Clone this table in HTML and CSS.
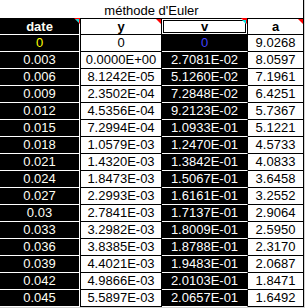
FILE: index.html
```html
<!DOCTYPE html>
<html>
<head>
<meta charset="utf-8">
<link rel="stylesheet" href="styles.css">
</head>
<body>
<div class="sheet">
  <div class="title">méthode d'Euler</div>

  <div class="cell c-date head note-inv">date</div>
  <div class="cell c-y head note">y</div>
  <div class="cell c-v head active note-inv">v</div>
  <div class="cell c-a head note">a</div>

  <div class="cell c-date first">0</div>
  <div class="cell c-y">0</div>
  <div class="cell c-v first">0</div>
  <div class="cell c-a">9.0268</div>

  <div class="cell c-date">0.003</div><div class="cell c-y">0.0000E+00</div><div class="cell c-v">2.7081E-02</div><div class="cell c-a">8.0597</div>
  <div class="cell c-date">0.006</div><div class="cell c-y">8.1242E-05</div><div class="cell c-v">5.1260E-02</div><div class="cell c-a">7.1961</div>
  <div class="cell c-date">0.009</div><div class="cell c-y">2.3502E-04</div><div class="cell c-v">7.2848E-02</div><div class="cell c-a">6.4251</div>
  <div class="cell c-date">0.012</div><div class="cell c-y">4.5356E-04</div><div class="cell c-v">9.2123E-02</div><div class="cell c-a">5.7367</div>
  <div class="cell c-date">0.015</div><div class="cell c-y">7.2994E-04</div><div class="cell c-v">1.0933E-01</div><div class="cell c-a">5.1221</div>
  <div class="cell c-date">0.018</div><div class="cell c-y">1.0579E-03</div><div class="cell c-v">1.2470E-01</div><div class="cell c-a">4.5733</div>
  <div class="cell c-date">0.021</div><div class="cell c-y">1.4320E-03</div><div class="cell c-v">1.3842E-01</div><div class="cell c-a">4.0833</div>
  <div class="cell c-date">0.024</div><div class="cell c-y">1.8473E-03</div><div class="cell c-v">1.5067E-01</div><div class="cell c-a">3.6458</div>
  <div class="cell c-date">0.027</div><div class="cell c-y">2.2993E-03</div><div class="cell c-v">1.6161E-01</div><div class="cell c-a">3.2552</div>
  <div class="cell c-date">0.03</div><div class="cell c-y">2.7841E-03</div><div class="cell c-v">1.7137E-01</div><div class="cell c-a">2.9064</div>
  <div class="cell c-date">0.033</div><div class="cell c-y">3.2982E-03</div><div class="cell c-v">1.8009E-01</div><div class="cell c-a">2.5950</div>
  <div class="cell c-date">0.036</div><div class="cell c-y">3.8385E-03</div><div class="cell c-v">1.8788E-01</div><div class="cell c-a">2.3170</div>
  <div class="cell c-date">0.039</div><div class="cell c-y">4.4021E-03</div><div class="cell c-v">1.9483E-01</div><div class="cell c-a">2.0687</div>
  <div class="cell c-date">0.042</div><div class="cell c-y">4.9866E-03</div><div class="cell c-v">2.0103E-01</div><div class="cell c-a">1.8471</div>
  <div class="cell c-date">0.045</div><div class="cell c-y">5.5897E-03</div><div class="cell c-v">2.0657E-01</div><div class="cell c-a">1.6492</div>
</div>
</body>
</html>
```

FILE: styles.css
```css
html, body {
  margin: 0;
  padding: 0;
  background: #d4d4d4;
  width: 305px;
  height: 308px;
  overflow: hidden;
}

.sheet {
  width: 304px;
  display: grid;
  grid-template-columns: 80px 82px 86px 56px;
  grid-template-rows: 19px 16px;
  grid-auto-rows: 17px;
  font-family: "Liberation Sans", Arial, sans-serif;
  font-size: 13px;
  color: #000;
}

.title {
  grid-column: 1 / 5;
  box-sizing: border-box;
  background: #fff;
  border-bottom: 1px solid #000;
  border-right: 1px solid #000;
  text-align: center;
  line-height: 14px;
  padding-top: 4px;
}

.cell {
  box-sizing: border-box;
  position: relative;
  text-align: center;
  line-height: 16px;
  white-space: nowrap;
}

.cell.head {
  line-height: 15px;
  font-weight: bold;
}

.c-date {
  background: #000;
  color: #fffff4;
  border-right: 1px solid #fff;
  border-bottom: 1px solid #fff;
}

.c-y {
  background: #fff;
  border-left: 1px solid #000;
  border-right: 1px solid #000;
  border-bottom: 1px solid #000;
}

.c-v {
  background: #000;
  color: #fff;
  border-right: 1px solid #000;
  border-bottom: 1px solid #fff;
}

.c-a {
  background: #fff;
  border-right: 1px solid #000;
  border-bottom: 1px solid #000;
}

.c-v.active {
  background: #fff;
  color: #000;
  border-bottom: 1px solid #000;
  box-shadow: inset 0 0 0 1px #fff, inset 0 0 0 2px #000;
}

.c-date.first { color: #ffff00; }
.c-v.first { color: #4040ff; }

.note::after,
.note-inv::after {
  content: "";
  position: absolute;
  top: 0;
  right: 0;
  width: 0;
  height: 0;
  border-top: 5px solid #f00;
  border-left: 5px solid transparent;
}

.note-inv::after {
  border-top-color: #00e0e0;
  border-left-width: 4px;
  border-top-width: 4px;
}

.note-inv::before {
  content: "";
  position: absolute;
  top: -1px;
  right: -1px;
  width: 0;
  height: 0;
  border-top: 6px solid #f00;
  border-left: 6px solid transparent;
}

.c-v.note-inv::before { right: 0; }
.c-v.note-inv::after { right: 1px; top: 1px; }
```
